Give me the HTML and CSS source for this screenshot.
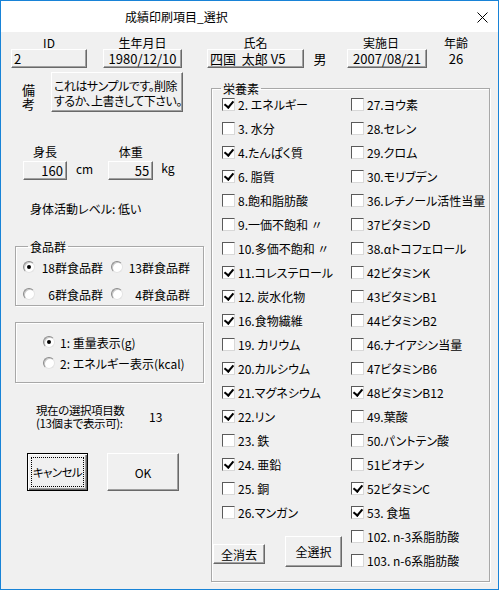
FILE: index.html
```html
<!DOCTYPE html>
<html lang="ja">
<head>
<meta charset="utf-8">
<title>成績印刷項目_選択</title>
<link rel="stylesheet" href="styles.css">
</head>
<body>
<div class="window">
  <div class="titlebar">
    <span class="title">成績印刷項目_選択</span>
    <svg class="close" width="11" height="11" viewBox="0 0 11 11"><path d="M0.5 0.5 L10.5 10.5 M10.5 0.5 L0.5 10.5" stroke="#000" stroke-width="1" fill="none"/></svg>
  </div>
  <div class="client">
    <div class="header">
      <div class="field f-id"><span class="field-label">ID</span><span class="box left-text">2</span></div>
      <div class="field f-dob"><span class="field-label">生年月日</span><span class="box">1980/12/10</span></div>
      <div class="field f-name"><span class="field-label">氏名</span><span class="box left-text">四国&nbsp; 太郎 V5</span></div>
      <div class="field f-sex"><span class="field-label"></span><span class="plain">男</span></div>
      <div class="field f-date"><span class="field-label">実施日</span><span class="box">2007/08/21</span></div>
      <div class="field f-age"><span class="field-label">年齢</span><span class="plain">26</span></div>
    </div>
    <div class="main">
      <div class="left">
        <div class="remarks">
          <div class="remarks-label"><span>備</span><span>考</span></div>
          <div class="box note">これはサンプルです。削除<br>するか、上書きして下さい。</div>
        </div>
        <div class="body-row">
          <div class="field f-h"><span class="bm-label">身長</span><span class="box num">160</span></div>
          <span class="unit u-cm">cm</span>
          <div class="field f-w"><span class="bm-label">体重</span><span class="box num">55</span></div>
          <span class="unit u-kg">kg</span>
        </div>
        <div class="activity">身体活動レベル: 低い</div>
        <fieldset class="group food">
          <legend>食品群</legend>
          <div class="food-row">
            <span class="radio on"></span><span class="food-l1">18群食品群</span>
            <span class="radio r2"></span><span class="food-l2">13群食品群</span>
          </div>
          <div class="food-row row2">
            <span class="radio"></span><span class="food-l1">6群食品群</span>
            <span class="radio r2"></span><span class="food-l2">4群食品群</span>
          </div>
        </fieldset>
        <fieldset class="group mode">
          <div class="mode-row"><span class="radio on"></span><span class="mode-l">1: 重量表示(g)</span></div>
          <div class="mode-row row2"><span class="radio"></span><span class="mode-l">2: エネルギー表示(kcal)</span></div>
        </fieldset>
        <div class="count">
          <div class="count-text">現在の選択項目数<br>(13個まで表示可):</div>
          <div class="count-num">13</div>
        </div>
        <div class="actions">
          <div class="btn default"><span class="focus">キャンセル</span></div>
          <div class="btn ok">OK</div>
        </div>
      </div>
      <fieldset class="group nutrients">
        <legend>栄養素</legend>
        <div class="cols">
          <div class="col col1">
            <div class="item"><span class="cb on"></span>2. エネルギー</div>
            <div class="item"><span class="cb"></span>3. 水分</div>
            <div class="item"><span class="cb on"></span>4.たんぱく質</div>
            <div class="item"><span class="cb on"></span>6. 脂質</div>
            <div class="item"><span class="cb"></span>8.飽和脂肪酸</div>
            <div class="item"><span class="cb"></span>9.一価不飽和 〃</div>
            <div class="item"><span class="cb"></span>10.多価不飽和 〃</div>
            <div class="item"><span class="cb on"></span>11.コレステロール</div>
            <div class="item"><span class="cb on"></span>12. 炭水化物</div>
            <div class="item"><span class="cb on"></span>16.食物繊維</div>
            <div class="item"><span class="cb"></span>19. カリウム</div>
            <div class="item"><span class="cb on"></span>20.カルシウム</div>
            <div class="item"><span class="cb on"></span>21.マグネシウム</div>
            <div class="item"><span class="cb on"></span>22.リン</div>
            <div class="item"><span class="cb"></span>23. 鉄</div>
            <div class="item"><span class="cb on"></span>24. 亜鉛</div>
            <div class="item"><span class="cb"></span>25. 銅</div>
            <div class="item"><span class="cb"></span>26.マンガン</div>
            <div class="col-buttons">
              <div class="btn clear">全消去</div>
              <div class="btn all">全選択</div>
            </div>
          </div>
          <div class="col col2">
            <div class="item"><span class="cb"></span>27.ヨウ素</div>
            <div class="item"><span class="cb"></span>28.セレン</div>
            <div class="item"><span class="cb"></span>29.クロム</div>
            <div class="item"><span class="cb"></span>30.モリブデン</div>
            <div class="item"><span class="cb"></span>36.レチノール活性当量</div>
            <div class="item"><span class="cb"></span>37ビタミンD</div>
            <div class="item"><span class="cb"></span>38.αトコフェロール</div>
            <div class="item"><span class="cb"></span>42ビタミンK</div>
            <div class="item"><span class="cb"></span>43ビタミンB1</div>
            <div class="item"><span class="cb"></span>44ビタミンB2</div>
            <div class="item"><span class="cb"></span>46.ナイアシン当量</div>
            <div class="item"><span class="cb"></span>47ビタミンB6</div>
            <div class="item"><span class="cb on"></span>48ビタミンB12</div>
            <div class="item"><span class="cb"></span>49.葉酸</div>
            <div class="item"><span class="cb"></span>50.パントテン酸</div>
            <div class="item"><span class="cb"></span>51ビオチン</div>
            <div class="item"><span class="cb on"></span>52ビタミンC</div>
            <div class="item"><span class="cb on"></span>53. 食塩</div>
            <div class="item"><span class="cb"></span>102. n-3系脂肪酸</div>
            <div class="item"><span class="cb"></span>103. n-6系脂肪酸</div>
          </div>
        </div>
      </fieldset>
    </div>
  </div>
</div>
</body>
</html>
```
FILE: styles.css
```css
* { box-sizing: border-box; }

body {
  margin: 0;
  background: #fff;
  font-family: "Noto Sans CJK JP", "Noto Sans", sans-serif;
  font-size: 12px;
  color: #000;
  font-feature-settings: "palt";
}

.window {
  width: 499px;
  height: 590px;
  border: 1px solid #1883d7;
  background: #f0f0f0;
  display: flex;
  flex-direction: column;
}

.titlebar {
  height: 31px;
  flex-shrink: 0;
  background: #fff;
  display: flex;
  align-items: center;
  padding: 1px 10px 0 124px;
}
.title { flex: 1; font-size: 12px; line-height: 14px; }
.close { display: block; }

.client { flex: 1; }

/* ---------- header ---------- */
.header {
  display: flex;
  align-items: flex-start;
  height: 36px;
  padding: 4px 0 0 10px;
}
.field { display: flex; flex-direction: column; align-items: center; }
.field-label { height: 13px; line-height: 13px; font-size: 12px; white-space: nowrap; }

.box {
  display: block;
  height: 19px;
  border: 1px solid;
  border-color: #fff #696969 #696969 #fff;
  box-shadow: inset -1px -1px 0 #a0a0a0;
  background: #f0f0f0;
  font-size: 13px;
  line-height: 17px;
  padding: 0 2px;
  white-space: nowrap;
  text-align: center;
  width: 100%;
}
.box.left-text { text-align: left; }
.plain { display: block; height: 19px; line-height: 19px; font-size: 13px; }

.f-id { width: 76px; }
.f-dob { width: 79px; margin-left: 16px; }
.f-name { width: 97px; margin-left: 25px; }
.f-sex { width: 14px; margin-left: 9px; }
.f-date { width: 80px; margin-left: 20px; }
.f-date .field-label { margin-right: 12px; }
.f-age { width: 26px; margin-left: 16px; }

/* ---------- main ---------- */
.main { display: flex; align-items: flex-start; }
.left { width: 210px; display: flex; flex-direction: column; }

.remarks { display: flex; align-items: flex-start; margin-top: 4px; }
.remarks-label {
  display: flex;
  flex-direction: column;
  margin: 11px 0 0 21px;
  width: 14px;
  font-size: 13px;
  line-height: 14px;
}
.box.note {
  width: 132px;
  height: 40px;
  margin-left: 15px;
  text-align: left;
  font-size: 12px;
  letter-spacing: -0.5px;
  line-height: 14.5px;
  padding: 6px 1px 0 2px;
  white-space: nowrap;
}

.body-row { display: flex; align-items: flex-start; margin-top: 33px; }
.bm-label { height: 14px; line-height: 14px; font-size: 12px; margin-bottom: 2px; }
.box.num { text-align: right; padding-right: 3px; }
.f-h { width: 44px; margin-left: 22px; }
.f-w { width: 45px; margin-left: 15px; }
.unit { font-size: 12px; line-height: 12px; margin-top: 18px; }
.u-cm { margin-left: 9px; }
.u-kg { margin-left: 8px; margin-top: 17px; }

.activity { margin: 22px 0 0 29px; line-height: 14px; font-size: 12px; }

.group {
  margin: 0;
  padding: 0;
  border: 1px solid #a8a8a8;
  box-shadow: inset 1px 1px 0 #fff, 1px 1px 0 #fff;
  min-width: 0;
}
.group legend {
  padding: 0 2px;
  line-height: 13px;
  font-size: 12px;
}

.food { width: 189px; margin: 24px 0 0 14px; padding: 4px 0 1px 0; }
.food legend { margin-left: 12px; }
.food-row { display: flex; align-items: center; height: 20px; padding-left: 7px; }
.food-row.row2 { margin-top: 7px; }
.food-l1 { width: 68px; text-align: right; white-space: nowrap; }
.food-l2 { width: 67px; text-align: right; white-space: nowrap; }
.radio.r2 { margin-left: 8px; }

.radio {
  position: relative;
  display: block;
  flex-shrink: 0;
  width: 12px;
  height: 12px;
  border-radius: 50%;
  background: #fff;
  border: 1px solid;
  border-color: #8a8a8a #e3e3e3 #e3e3e3 #8a8a8a;
  box-shadow: inset 1px 1px 0 #c8c8c8;
}
.radio.on::after {
  content: "";
  position: absolute;
  left: 3px;
  top: 3px;
  width: 4px;
  height: 4px;
  border-radius: 50%;
  background: #000;
}

.mode { width: 189px; margin: 16px 0 0 14px; padding: 10px 0 10px 0; }
.mode-row { display: flex; align-items: center; height: 18px; padding-left: 27px; }
.mode-row.row2 { margin-top: 3px; }
.mode-l { margin-left: 5px; white-space: nowrap; }

.count { display: flex; align-items: center; margin: 21px 0 0 35px; }
.count-text { width: 113px; line-height: 13px; font-size: 11.5px; letter-spacing: -0.4px; white-space: nowrap; }
.count-num { font-size: 12px; line-height: 13px; margin-top: -1px; }

.actions { display: flex; align-items: flex-start; margin: 23px 0 0 26px; }

.btn {
  display: flex;
  align-items: center;
  justify-content: center;
  border: 1px solid;
  border-color: #fff #696969 #696969 #fff;
  box-shadow: inset -1px -1px 0 #a0a0a0;
  background: #f0f0f0;
  font-size: 12px;
  white-space: nowrap;
}
.btn.default {
  width: 61px;
  height: 38px;
  border: 1px solid #000;
  box-shadow: inset 1px 1px 0 #fff, inset -1px -1px 0 #696969, inset -2px -2px 0 #a0a0a0;
  padding: 3px;
}
.btn.default .focus {
  display: flex;
  align-items: center;
  justify-content: center;
  width: 100%;
  height: 100%;
  border: 1px dotted #000;
  font-size: 11.5px;
  letter-spacing: -0.6px;
}
.btn.ok { width: 72px; height: 38px; margin-left: 19px; }

/* ---------- nutrients ---------- */
.nutrients {
  width: 279px;
  height: 500px;
  margin: 14px 0 0 0;
  padding: 0 0 0 1px;
}
.nutrients legend { margin-left: 8px; }
.cols { display: flex; margin-top: -3px; }
.col1 { width: 138px; }
.col2 { flex: 1; }
.item {
  display: flex;
  align-items: center;
  height: 24px;
  white-space: nowrap;
  font-size: 12px;
}
.col1 .item { padding-left: 9px; }

.cb {
  position: relative;
  display: block;
  flex-shrink: 0;
  width: 13px;
  height: 13px;
  margin-right: 3px;
  background: #fff;
  border: 1px solid;
  border-color: #5a5a5a #d8d8d8 #d8d8d8 #5a5a5a;
}
.cb.on::after {
  content: "";
  position: absolute;
  left: 3px;
  top: 0px;
  width: 4px;
  height: 7px;
  border-right: 2px solid #000;
  border-bottom: 2px solid #000;
  transform: rotate(40deg);
}

.col-buttons { display: flex; align-items: flex-start; }
.btn.clear { width: 52px; height: 20px; margin-top: 20px; }
.btn.all { width: 57px; height: 31px; margin: 12px 0 0 20px; }
```
